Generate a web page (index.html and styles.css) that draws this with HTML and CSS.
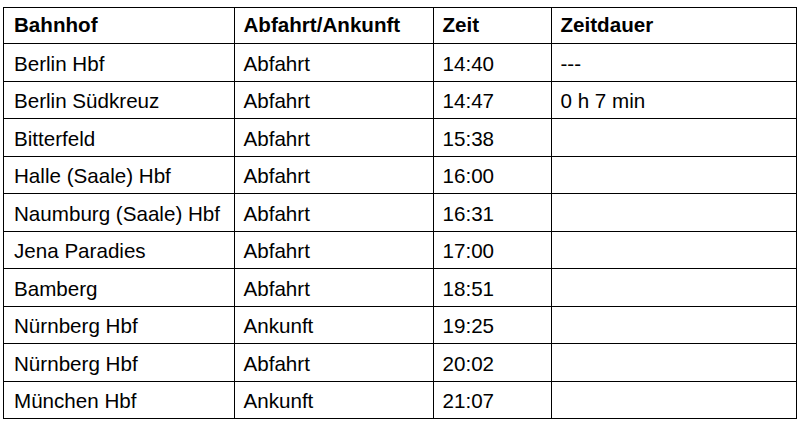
FILE: index.html
```html
<!DOCTYPE html>
<html lang="de">
<head>
<meta charset="utf-8">
<title>Fahrplan</title>
<link rel="stylesheet" href="styles.css">
</head>
<body>
<table class="timetable">
  <colgroup>
    <col class="c-station">
    <col class="c-type">
    <col class="c-time">
    <col class="c-dur">
  </colgroup>
  <thead>
    <tr><th>Bahnhof</th><th>Abfahrt/Ankunft</th><th>Zeit</th><th>Zeitdauer</th></tr>
  </thead>
  <tbody>
    <tr><td>Berlin Hbf</td><td>Abfahrt</td><td>14:40</td><td>---</td></tr>
    <tr><td>Berlin Südkreuz</td><td>Abfahrt</td><td>14:47</td><td>0 h 7 min</td></tr>
    <tr><td>Bitterfeld</td><td>Abfahrt</td><td>15:38</td><td></td></tr>
    <tr><td>Halle (Saale) Hbf</td><td>Abfahrt</td><td>16:00</td><td></td></tr>
    <tr><td>Naumburg (Saale) Hbf</td><td>Abfahrt</td><td>16:31</td><td></td></tr>
    <tr><td>Jena Paradies</td><td>Abfahrt</td><td>17:00</td><td></td></tr>
    <tr><td>Bamberg</td><td>Abfahrt</td><td>18:51</td><td></td></tr>
    <tr><td>Nürnberg Hbf</td><td>Ankunft</td><td>19:25</td><td></td></tr>
    <tr><td>Nürnberg Hbf</td><td>Abfahrt</td><td>20:02</td><td></td></tr>
    <tr><td>München Hbf</td><td>Ankunft</td><td>21:07</td><td></td></tr>
  </tbody>
</table>
</body>
</html>
```
FILE: styles.css
```css
html, body {
  margin: 0;
  padding: 0;
  background: #fff;
}
body {
  padding: 7px 0 0 3px;
  font-family: "Liberation Sans", Arial, sans-serif;
  color: #000;
}
.timetable {
  border-collapse: collapse;
  table-layout: fixed;
  width: 793px;
  font-size: 20.6px;
  line-height: 23px;
}
.c-station { width: 230.5px; }
.c-type { width: 199px; }
.c-time { width: 118px; }
.c-dur { width: 245.5px; }
.timetable th,
.timetable td {
  border: 1px solid #000;
  text-align: left;
  vertical-align: top;
  white-space: nowrap;
}
.timetable th {
  font-weight: bold;
  padding: 5px 9px 7px 9px;
}
.timetable td {
  padding: 7.5px 9px 6px 9px;
}
.timetable th:first-child,
.timetable td:first-child {
  padding-left: 10px;
}
```
